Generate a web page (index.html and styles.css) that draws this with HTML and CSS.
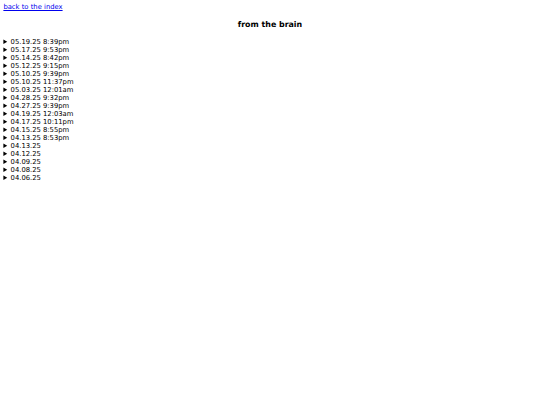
FILE: index.html
```html
<!DOCTYPE html>
<html>
<head>
<meta charset="utf-8">
<title>from the brain</title>
<link rel="stylesheet" href="styles.css">
</head>
<body class="page">
<a class="back" href="#">back to the index</a>
<h3 class="title">from the brain</h3>
<div class="entries">
<details class="entry"><summary>05.19.25 8:39pm</summary><p>...</p></details>
<details class="entry"><summary>05.17.25 9:53pm</summary><p>...</p></details>
<details class="entry"><summary>05.14.25 8:42pm</summary><p>...</p></details>
<details class="entry"><summary>05.12.25 9:15pm</summary><p>...</p></details>
<details class="entry"><summary>05.10.25 9:39pm</summary><p>...</p></details>
<details class="entry"><summary>05.10.25 11:37pm</summary><p>...</p></details>
<details class="entry"><summary>05.03.25 12:01am</summary><p>...</p></details>
<details class="entry"><summary>04.28.25 9:32pm</summary><p>...</p></details>
<details class="entry"><summary>04.27.25 9:39pm</summary><p>...</p></details>
<details class="entry"><summary>04.19.25 12:03am</summary><p>...</p></details>
<details class="entry"><summary>04.17.25 10:11pm</summary><p>...</p></details>
<details class="entry"><summary>04.15.25 8:55pm</summary><p>...</p></details>
<details class="entry"><summary>04.13.25 8:53pm</summary><p>...</p></details>
<details class="entry"><summary>04.13.25</summary><p>...</p></details>
<details class="entry"><summary>04.12.25</summary><p>...</p></details>
<details class="entry"><summary>04.09.25</summary><p>...</p></details>
<details class="entry"><summary>04.08.25</summary><p>...</p></details>
<details class="entry"><summary>04.06.25</summary><p>...</p></details>
</div>
</body>
</html>
```
FILE: styles.css
```css
html {
  background: #ffffff;
}
.page {
  margin: 3.375px;
  font-family: "DejaVu Sans", sans-serif;
  font-size: 6.8px;
  line-height: 8px;
  color: #000000;
}
.back {
  color: #0000ee;
  text-decoration: underline;
}
.title {
  font-size: 7.9px;
  line-height: 8.86px;
  font-weight: bold;
  text-align: center;
  margin: 9.9px 0 7.9px;
}
.entry {
  display: block;
}
.entry summary {
  display: list-item;
  cursor: pointer;
}
```
